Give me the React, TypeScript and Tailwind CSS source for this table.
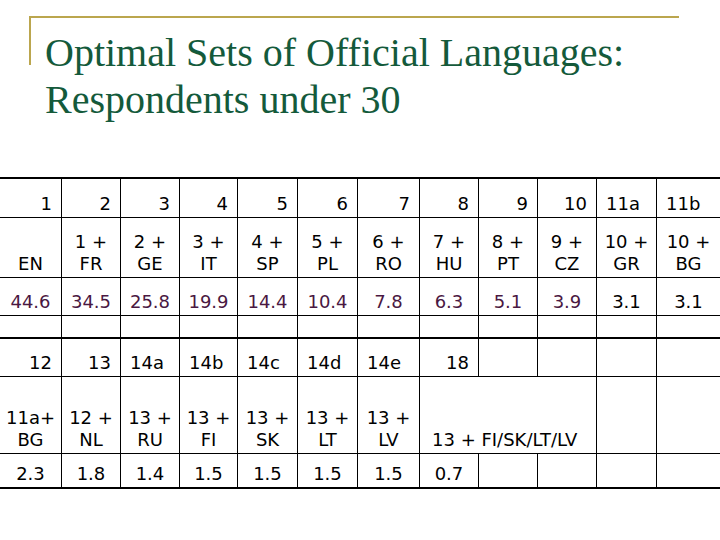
import type { ReactNode } from "react"

type CellDef = {
  t?: ReactNode
  a?: "l" | "r" | "c"
  span?: number
  tone?: "m"
}

const grid =
  "grid grid-cols-[62px_59px_59px_58px_60px_60px_62px_59px_59px_59px_60px_1fr]"

function two(a: string, b: string) {
  return (
    <>
      {a}
      <br />
      {b}
    </>
  )
}

const sectionA: { h: string; cells: CellDef[] }[] = [
  {
    h: "h-[39px] border-b",
    cells: [
      { t: "1", a: "r" },
      { t: "2", a: "r" },
      { t: "3", a: "r" },
      { t: "4", a: "r" },
      { t: "5", a: "r" },
      { t: "6", a: "r" },
      { t: "7", a: "r" },
      { t: "8", a: "r" },
      { t: "9", a: "r" },
      { t: "10", a: "r" },
      { t: "11a", a: "l" },
      { t: "11b", a: "l" },
    ],
  },
  {
    h: "h-[60px] border-b",
    cells: [
      { t: "EN" },
      { t: two("1 +", "FR") },
      { t: two("2 +", "GE") },
      { t: two("3 +", "IT") },
      { t: two("4 +", "SP") },
      { t: two("5 +", "PL") },
      { t: two("6 +", "RO") },
      { t: two("7 +", "HU") },
      { t: two("8 +", "PT") },
      { t: two("9 +", "CZ") },
      { t: two("10 +", "GR") },
      { t: two("10 +", "BG") },
    ],
  },
  {
    h: "h-[38px] border-b",
    cells: [
      { t: "44.6", tone: "m" },
      { t: "34.5", tone: "m" },
      { t: "25.8", tone: "m" },
      { t: "19.9", tone: "m" },
      { t: "14.4", tone: "m" },
      { t: "10.4", tone: "m" },
      { t: "7.8", tone: "m" },
      { t: "6.3", tone: "m" },
      { t: "5.1", tone: "m" },
      { t: "3.9", tone: "m" },
      { t: "3.1" },
      { t: "3.1" },
    ],
  },
  { h: "h-[21px]", cells: Array.from({ length: 12 }, () => ({})) },
]

const sectionB: { h: string; cells: CellDef[] }[] = [
  {
    h: "h-[38px] border-b",
    cells: [
      { t: "12", a: "r" },
      { t: "13", a: "r" },
      { t: "14a", a: "l" },
      { t: "14b", a: "l" },
      { t: "14c", a: "l" },
      { t: "14d", a: "l" },
      { t: "14e", a: "l" },
      { t: "18", a: "r" },
      {},
      {},
      {},
      {},
    ],
  },
  {
    h: "h-[77px] border-b",
    cells: [
      { t: two("11a+", "BG") },
      { t: two("12 +", "NL") },
      { t: two("13 +", "RU") },
      { t: two("13 +", "FI") },
      { t: two("13 +", "SK") },
      { t: two("13 +", "LT") },
      { t: two("13 +", "LV") },
      { t: "13 + FI/SK/LT/LV", a: "l", span: 3 },
      {},
      {},
    ],
  },
  {
    h: "h-[33px]",
    cells: [
      { t: "2.3" },
      { t: "1.8" },
      { t: "1.4" },
      { t: "1.5" },
      { t: "1.5" },
      { t: "1.5" },
      { t: "1.5" },
      { t: "0.7" },
      {},
      {},
      {},
      {},
    ],
  },
]

function Cell({ c }: { c: CellDef }) {
  const align =
    c.a === "r"
      ? "justify-end pr-[9px] text-right"
      : c.a === "l"
        ? c.span
          ? "justify-start pl-[12px] text-left"
          : "justify-start pl-[9px] text-left"
        : "justify-center text-center"
  return (
    <div
      className={`flex items-end pb-[2px] border-r border-black last:border-r-0 ${align} ${
        c.span === 3 ? "col-span-3" : ""
      } ${c.tone === "m" ? "text-[#4a1842]" : "text-black"}`}
    >
      <div className="leading-[22px] whitespace-nowrap">{c.t}</div>
    </div>
  )
}

function Section({ rows, top }: { rows: { h: string; cells: CellDef[] }[]; top?: boolean }) {
  return (
    <div className={`border-black border-b-2 ${top ? "border-t-2" : ""}`}>
      {rows.map((r, i) => (
        <div key={i} className={`${grid} ${r.h} border-black`}>
          {r.cells.map((c, j) => (
            <Cell key={j} c={c} />
          ))}
        </div>
      ))}
    </div>
  )
}

export default function App() {
  return (
    <div className="w-[720px] h-[540px] bg-white overflow-hidden">
      {/* Title */}
      <div className="relative h-[177px]">
        <div className="absolute left-[29px] top-[16px] w-[650px] h-[49px] border-t-2 border-l-2 border-[#bba64e]" />
        <h1 className="relative pt-[29px] pl-[45px] font-['Liberation_Serif',serif] text-[40px] leading-[47px] text-[#145a3b] font-normal">
          Optimal Sets of Official Languages:
          <br />
          Respondents under 30
        </h1>
      </div>

      {/* Table */}
      <div className="font-['DejaVu_Sans',sans-serif] text-[18px]">
        <Section rows={sectionA} top />
        <Section rows={sectionB} />
      </div>
    </div>
  )
}
